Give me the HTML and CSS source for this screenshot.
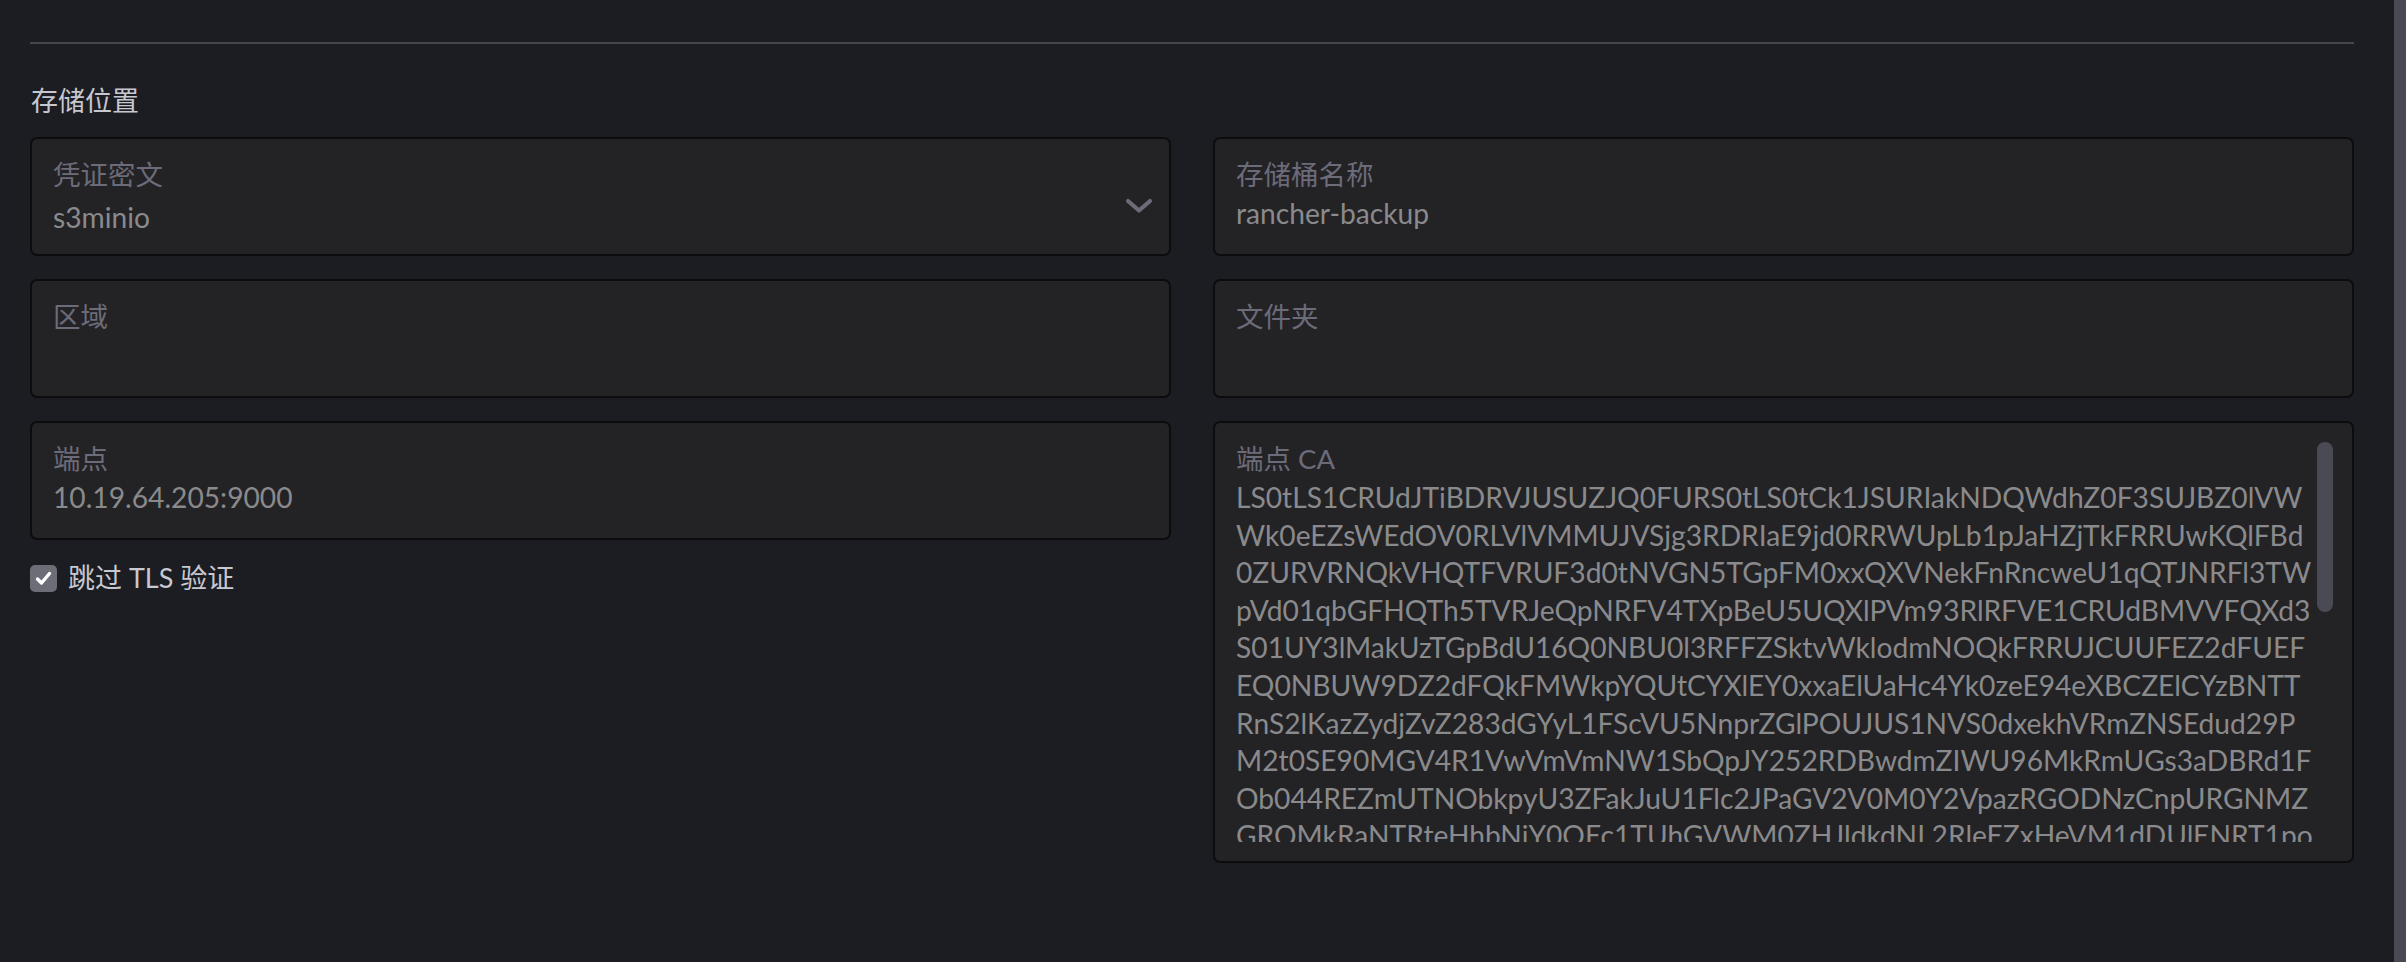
FILE: index.html
```html
<!DOCTYPE html>
<html lang="zh-CN">
<head>
<meta charset="utf-8">
<title>存储位置</title>
<link rel="stylesheet" href="styles.css">
</head>
<body>
<div class="app">
  <main class="content">
    <hr class="divider">
    <h3 class="section-title">存储位置</h3>
    <div class="form-grid">
      <div class="col">
        <div class="field field-select">
          <div class="field-body">
            <div class="field-label">凭证密文</div>
            <div class="field-value select-value">s3minio</div>
          </div>
          <svg class="chevron" width="28" height="16" viewBox="0 0 28 16"><path d="M3 3 L14 12.5 L25 3" fill="none" stroke="#6c6b78" stroke-width="4.2" stroke-linecap="round" stroke-linejoin="round"/></svg>
        </div>
        <div class="field">
          <div class="field-label">区域</div>
        </div>
        <div class="field">
          <div class="field-label">端点</div>
          <div class="field-value">10.19.64.205:9000</div>
        </div>
        <label class="checkbox-row">
          <span class="checkbox"><svg width="27" height="27" viewBox="0 0 27 27"><path d="M7.5 14 L11.5 18 L19.5 8.5" fill="none" stroke="#ffffff" stroke-width="3.4" stroke-linecap="round" stroke-linejoin="round"/></svg></span>
          <span class="checkbox-label">跳过 TLS 验证</span>
        </label>
      </div>
      <div class="col">
        <div class="field">
          <div class="field-label">存储桶名称</div>
          <div class="field-value">rancher-backup</div>
        </div>
        <div class="field">
          <div class="field-label">文件夹</div>
        </div>
        <div class="field field-textarea">
          <div class="field-label">端点 CA</div>
          <div class="textarea-text">LS0tLS1CRUdJTiBDRVJUSUZJQ0FURS0tLS0tCk1JSURIakNDQWdhZ0F3SUJBZ0lVW<br>Wk0eEZsWEdOV0RLVlVMMUJVSjg3RDRIaE9jd0RRWUpLb1pJaHZjTkFRRUwKQlFBd<br>0ZURVRNQkVHQTFVRUF3d0tNVGN5TGpFM0xxQXVNekFnRncweU1qQTJNRFl3TW<br>pVd01qbGFHQTh5TVRJeQpNRFV4TXpBeU5UQXlPVm93RlRFVE1CRUdBMVVFQXd3<br>S01UY3lMakUzTGpBdU16Q0NBU0l3RFFZSktvWklodmNOQkFRRUJCUUFEZ2dFUEF<br>EQ0NBUW9DZ2dFQkFMWkpYQUtCYXlEY0xxaElUaHc4Yk0zeE94eXBCZElCYzBNTT<br>RnS2lKazZydjZvZ283dGYyL1FScVU5NnprZGlPOUJUS1NVS0dxekhVRmZNSEdud29P<br>M2t0SE90MGV4R1VwVmVmNW1SbQpJY252RDBwdmZIWU96MkRmUGs3aDBRd1F<br>Ob044REZmUTNObkpyU3ZFakJuU1Flc2JPaGV2V0M0Y2VpazRGODNzCnpURGNMZ<br>GRQMkRaNTRteHhbNiY0OEc1TUhGVWM0ZHJldkdNL2RleEZxHeVM1dDUlENRT1po</div>
          <div class="scroll-thumb"></div>
        </div>
      </div>
    </div>
  </main>
  <div class="page-scrollbar"></div>
</div>
</body>
</html>
```

FILE: styles.css
```css
html, body {
  margin: 0;
  padding: 0;
  background: #1c1d22;
  height: 100%;
  overflow: hidden;
}

body {
  font-family: Lato, "Noto Sans CJK SC", sans-serif;
  font-size: 27px;
  color: #c6c6ce;
}

.app {
  display: flex;
  height: 962px;
}

.content {
  flex: 1;
  padding: 42px 40px 0 30px;
  min-width: 0;
}

.page-scrollbar {
  width: 12px;
  background: #4a4953;
  flex-shrink: 0;
}

.divider {
  margin: 0;
  border: 0;
  height: 2px;
  background: #46464e;
}

.section-title {
  margin: 39px 0 18px 1px;
  font-weight: 400;
  font-size: 27px;
  line-height: 36px;
  color: #c7c7cf;
}

.form-grid {
  display: grid;
  grid-template-columns: 1fr 1fr;
  column-gap: 42px;
}

.col {
  display: flex;
  flex-direction: column;
  gap: 23px;
}

.field {
  position: relative;
  box-sizing: border-box;
  height: 119px;
  padding: 18px 20px 0 21px;
  background: #232326;
  border: 2px solid #0c0c0e;
  border-radius: 7px;
}

.field-select {
  display: flex;
  align-items: center;
  padding-right: 16px;
}

.field-select .field-body {
  flex: 1;
  align-self: flex-start;
}

.chevron {
  margin-top: 0;
  flex-shrink: 0;
}

.field-label {
  font-size: 27.5px;
  line-height: 36px;
  color: #6c6b79;
}

.field-value {
  font-size: 28.2px;
  line-height: 36px;
  margin-top: 2px;
  color: #8a8a8c;
}

.select-value {
  margin-top: 6px;
}

.field-textarea {
  height: 442px;
  padding-right: 38px;
}

.textarea-text {
  margin-top: 2px;
  font-size: 28.2px;
  line-height: 37.6px;
  color: #8a8a8c;
  white-space: nowrap;
  height: 363px;
  overflow: hidden;
}

.scroll-thumb {
  position: absolute;
  right: 19px;
  top: 19px;
  width: 16px;
  height: 170px;
  border-radius: 8px;
  background: #4a4a54;
}

.checkbox-row {
  display: flex;
  align-items: center;
  gap: 11px;
  margin-top: 1px;
  height: 28px;
}

.checkbox {
  width: 27px;
  height: 27px;
  border-radius: 5px;
  background: #6d6d78;
  display: flex;
}

.checkbox-label {
  font-size: 27px;
  line-height: 36px;
  color: #c8c8d0;
}
```
